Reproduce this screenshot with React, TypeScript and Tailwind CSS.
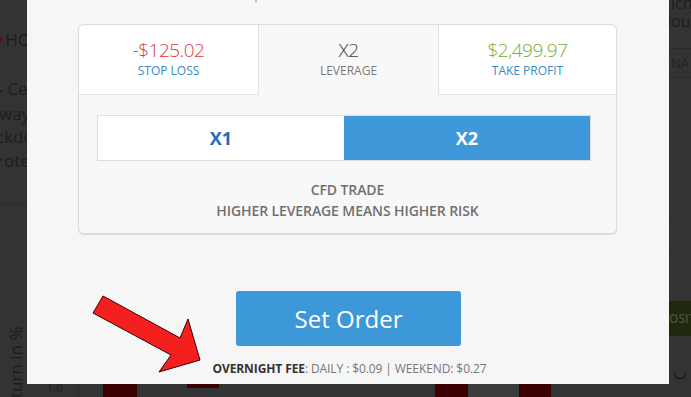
import React from 'react';

const font = { fontFamily: '"Open Sans", "Noto Sans", sans-serif' };

function Arrow() {
  return (
    <svg width="120" height="90" viewBox="0 0 120 90" className="absolute left-[88px] top-[290px]">
      <polygon
        points="5,23 15,6 92,48 100,29 112,70 71,82 83,65"
        fill="#f41f1f"
        stroke="#3a0000"
        strokeWidth="1"
        strokeLinejoin="miter"
      />
    </svg>
  );
}

export default function App() {
  return (
    <div className="relative w-[691px] h-[397px] bg-[#333333] overflow-hidden" style={font}>
      {/* dimmed page behind the modal */}
      <div className="flex flex-col h-full">
        <div className="flex h-[384px]">
          <div className="w-[27px] overflow-hidden text-[#1d1d1d] text-[17px] leading-[23.5px] whitespace-nowrap">
            <div className="mt-[28px] flex items-center gap-[2px] -ml-[4px]">
              <span className="text-[#5a0c0c] text-[12px]">♥</span>
              <span>HC</span>
            </div>
            <div className="mt-[25px] -ml-[2px]">
              <span className="text-[10px] align-middle">▸</span> Cer
            </div>
            <div className="-ml-[1px]">way</div>
            <div className="-ml-[4px]">ckdo</div>
            <div className="-ml-[3px]">rotec</div>
            <div className="mt-[31px] border-t border-[#2a2a2a]"></div>
          </div>
          <div className="flex-1"></div>
          <div className="w-[22px] overflow-hidden text-[#1d1d1d] text-[16px] whitespace-nowrap flex flex-col">
            <div className="leading-[15px] -mt-[4px] pl-[2px]">ıch</div>
            <div className="leading-[20px] -ml-[2px]">lou</div>
            <div className="mt-[17px] border-t border-[#2b2b2b]"></div>
            <div className="h-[28px] text-[13px] leading-[28px] text-[#222] pl-[2px]">NA</div>
            <div className="border-t border-[#2b2b2b]"></div>
            <div className="mt-[145px] border-t border-[#2f2f2f]"></div>
            <div className="mt-[28px] border-t border-[#2f2f2f]"></div>
            <div className="mt-[48px] h-[35px] bg-[#1e2a0b] text-[#4a4f3f] text-[12px] font-semibold leading-[35px]">
              OSIT
            </div>
            <div className="mt-[28px] text-[#111] text-[16px] leading-[14px] pl-[4px]">◡</div>
          </div>
        </div>
        <div className="flex h-[13px]">
          <div className="w-[79px] border-r border-[#2a2a2a] text-[#222] text-[11px] leading-[8px] pl-[47px]">1.0</div>
          <div className="w-[24px]"></div>
          <div className="w-[34px] bg-[#3a0000]"></div>
          <div className="w-[50px]"></div>
          <div className="w-[32px] h-[4px] bg-[#3a0000]"></div>
          <div className="w-[216px]"></div>
          <div className="w-[33px] bg-[#3a0000]"></div>
          <div className="w-[51px] bg-[#3b3b3b]"></div>
          <div className="w-[32px] bg-[#3a0000]"></div>
          <div className="flex-1"></div>
        </div>
      </div>

      <div className="absolute left-[6px] top-[340px] w-[20px] h-[60px]">
        <div className="origin-top-left -rotate-90 translate-y-[58px] whitespace-nowrap text-[17px] text-[#1d1d1d] leading-[20px]">
          turn in %
        </div>
      </div>

      {/* modal */}
      <div className="absolute left-[27px] top-0 w-[642px] h-[384px] bg-[#f6f6f6] flex flex-col">
        <div className="h-[3px] relative">
          <span className="absolute left-[228px] top-0 w-[2px] h-[2px] bg-[#f7a3b6]"></span>
        </div>
        <div className="mt-[21px] ml-[51px] w-[539px] rounded-[6px] border border-[#dcdcdc] bg-[#f8f8f8] shadow-[0_1px_1px_rgba(0,0,0,0.12)] flex flex-col">
          <div className="grid grid-cols-[180px_179px_1fr] h-[70px]">
            <div className="bg-white rounded-tl-[6px] border-b border-r border-[#e2e2e2] flex flex-col items-center pt-[12px]">
              <div className="text-[19px] font-light tracking-[-0.5px] leading-[26px] text-[#e0393e]">-$125.02</div>
              <div className="text-[12px] leading-[16px] text-[#3a8ac3]">STOP LOSS</div>
            </div>
            <div className="flex flex-col items-center pt-[12px]">
              <div className="text-[19px] font-light tracking-[-0.5px] leading-[26px] text-[#404040]">X2</div>
              <div className="text-[12px] leading-[16px] text-[#7a7a7a]">LEVERAGE</div>
            </div>
            <div className="bg-white rounded-tr-[6px] border-b border-l border-[#e2e2e2] flex flex-col items-center pt-[12px]">
              <div className="text-[19px] font-light tracking-[-0.5px] leading-[26px] text-[#79ad2f]">$2,499.97</div>
              <div className="text-[12px] leading-[16px] text-[#3a8ac3]">TAKE PROFIT</div>
            </div>
          </div>
          <div className="mt-[20px] ml-[18px] mr-[25px] h-[46px] flex border border-[#dddddd]">
            <div className="flex-1 bg-white flex items-center justify-center text-[18px] font-bold text-[#1c6eb3]">X1</div>
            <div className="flex-1 bg-[#3e98da] flex items-center justify-center text-[18px] font-bold text-white">X2</div>
          </div>
          <div className="mt-[18px] mb-[12px] flex flex-col items-center text-[14px] tracking-[-0.1px] font-semibold text-[#707070] leading-[21px]">
            <div>CFD TRADE</div>
            <div>HIGHER LEVERAGE MEANS HIGHER RISK</div>
          </div>
        </div>
        <div className="mt-[57px] ml-[209px] w-[225px] h-[55px] rounded-[3px] bg-[#3d98da] flex items-center justify-center text-white text-[24px] leading-none">
          Set Order
        </div>
        <div className="mt-[15px] text-center text-[12px] tracking-[-0.1px] text-[#777] leading-[16px] pl-[3px]">
          <span className="font-bold text-[#333]">OVERNIGHT FEE</span>: DAILY : $0.09 | WEEKEND: $0.27
        </div>
      </div>

      <Arrow />
    </div>
  );
}
